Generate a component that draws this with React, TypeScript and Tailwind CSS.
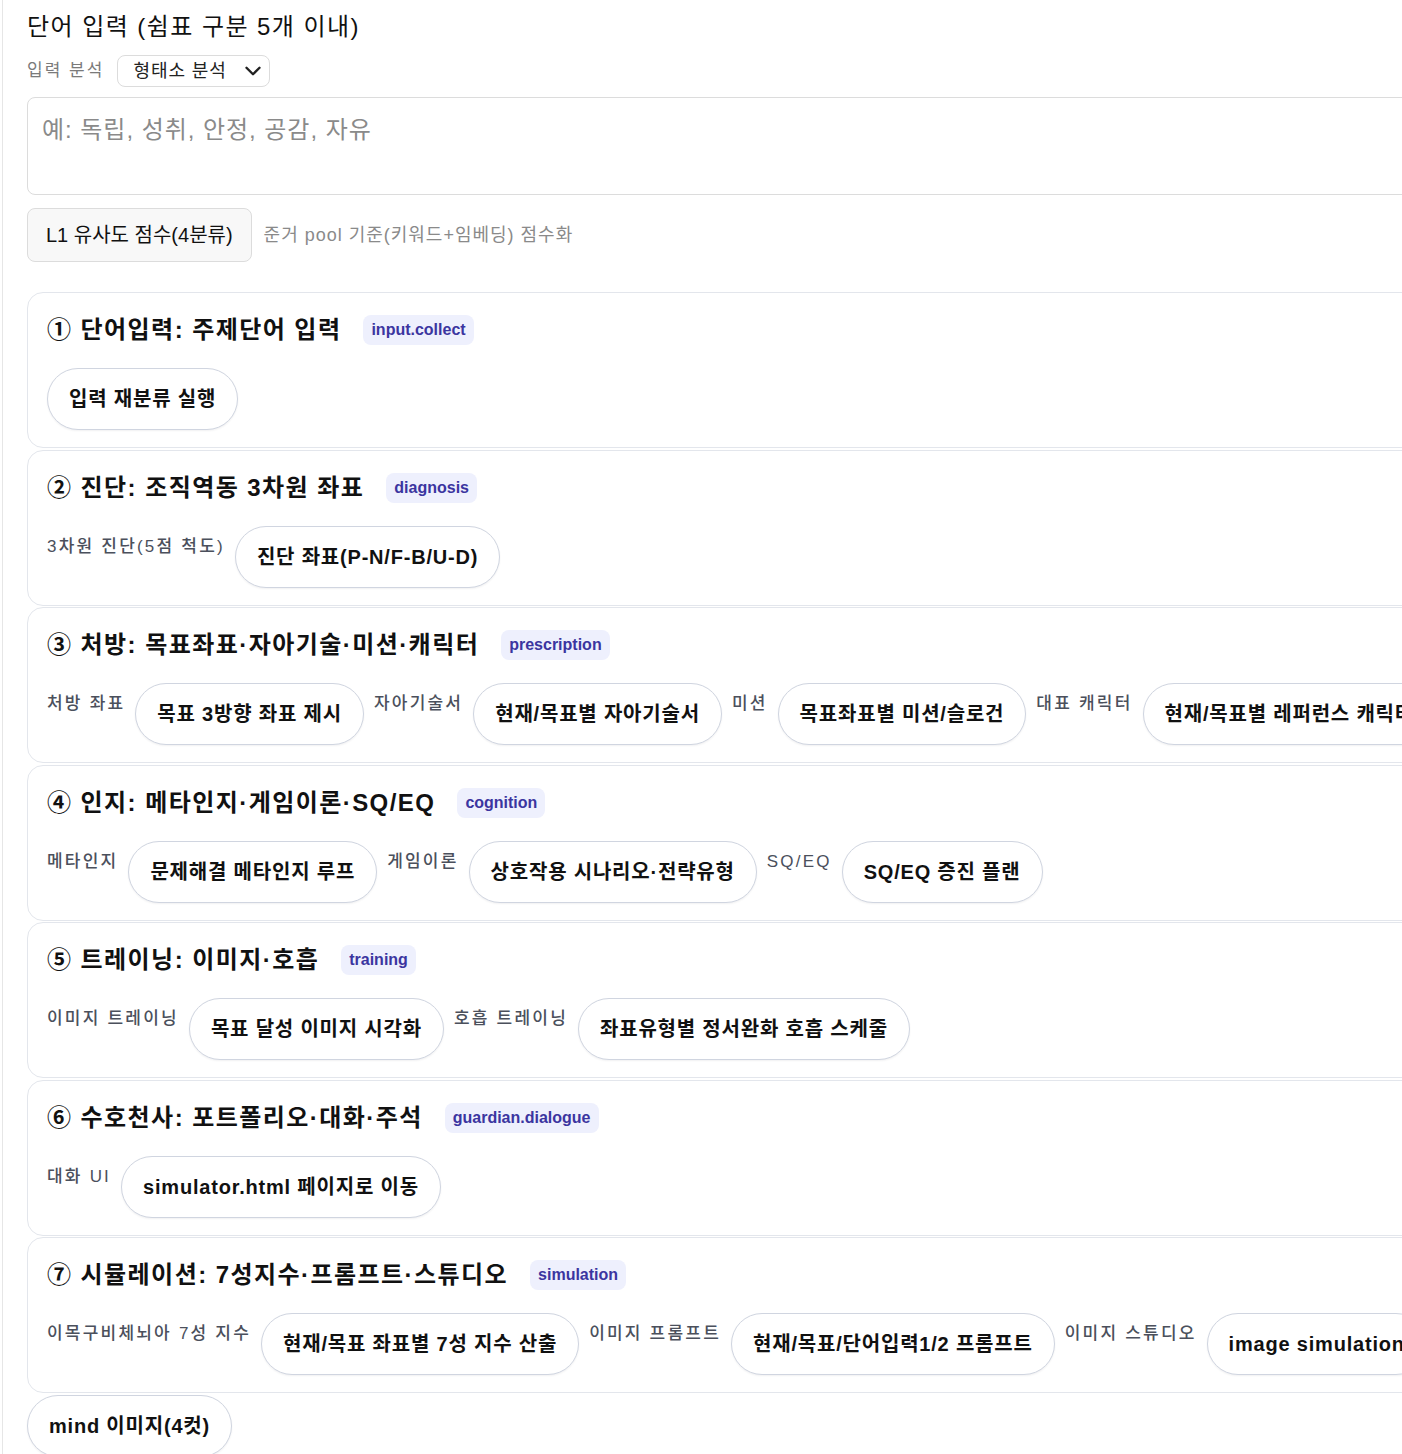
import React from 'react';
import { ChevronDown } from 'lucide-react';

// --- Data ---
type Item = { label?: string; chip: string };
type Stage = { title: string; tag: string; items: Item[] };

const STAGES: Stage[] = [
    {
        title: '① 단어입력: 주제단어 입력',
        tag: 'input.collect',
        items: [{ chip: '입력 재분류 실행' }],
    },
    {
        title: '② 진단: 조직역동 3차원 좌표',
        tag: 'diagnosis',
        items: [{ label: '3차원 진단(5점 척도)', chip: '진단 좌표(P-N/F-B/U-D)' }],
    },
    {
        title: '③ 처방: 목표좌표·자아기술·미션·캐릭터',
        tag: 'prescription',
        items: [
            { label: '처방 좌표', chip: '목표 3방향 좌표 제시' },
            { label: '자아기술서', chip: '현재/목표별 자아기술서' },
            { label: '미션', chip: '목표좌표별 미션/슬로건' },
            { label: '대표 캐릭터', chip: '현재/목표별 레퍼런스 캐릭터' },
        ],
    },
    {
        title: '④ 인지: 메타인지·게임이론·SQ/EQ',
        tag: 'cognition',
        items: [
            { label: '메타인지', chip: '문제해결 메타인지 루프' },
            { label: '게임이론', chip: '상호작용 시나리오·전략유형' },
            { label: 'SQ/EQ', chip: 'SQ/EQ 증진 플랜' },
        ],
    },
    {
        title: '⑤ 트레이닝: 이미지·호흡',
        tag: 'training',
        items: [
            { label: '이미지 트레이닝', chip: '목표 달성 이미지 시각화' },
            { label: '호흡 트레이닝', chip: '좌표유형별 정서완화 호흡 스케줄' },
        ],
    },
    {
        title: '⑥ 수호천사: 포트폴리오·대화·주석',
        tag: 'guardian.dialogue',
        items: [{ label: '대화 UI', chip: 'simulator.html 페이지로 이동' }],
    },
    {
        title: '⑦ 시뮬레이션: 7성지수·프롬프트·스튜디오',
        tag: 'simulation',
        items: [
            { label: '이목구비체뇌아 7성 지수', chip: '현재/목표 좌표별 7성 지수 산출' },
            { label: '이미지 프롬프트', chip: '현재/목표/단어입력1/2 프롬프트' },
            { label: '이미지 스튜디오', chip: 'image simulation' },
        ],
    },
];

function Chip({ children }: { children: React.ReactNode }) {
    return (
        <button className="shrink-0 h-[62px] px-[21px] rounded-full border border-[#d0d5e0] bg-white text-[20px] font-bold tracking-[0.04em] text-[#111] whitespace-nowrap shadow-[0_1px_2px_rgba(15,23,42,0.06)]">
            {children}
        </button>
    );
}

function StageCard({ stage }: { stage: Stage }) {
    return (
        <section className="rounded-2xl border border-[#e3e6ec] bg-white pl-[19px] pt-[20px] pb-[17px]">
            <div className="flex items-center h-[34px] gap-[22px]">
                <h3 className="text-[24px] leading-[34px] font-bold tracking-[0.06em] text-[#111] whitespace-nowrap">{stage.title}</h3>
                <span className="h-[30px] px-[8px] flex items-center rounded-lg bg-[#eef0fd] text-[16px] font-semibold text-[#3b35a0]">
                    {stage.tag}
                </span>
            </div>
            <div className="mt-[21px] flex items-start gap-[10px] whitespace-nowrap">
                {stage.items.map((it) => (
                    <React.Fragment key={it.chip}>
                        {it.label && (
                            <span className="shrink-0 mt-[9px] text-[17px] leading-6 font-medium tracking-[0.13em] text-[#4b505c]">
                                {it.label}
                            </span>
                        )}
                        <Chip>{it.chip}</Chip>
                    </React.Fragment>
                ))}
            </div>
        </section>
    );
}

export default function App() {
    return (
        <div className="w-[1402px] min-h-[1454px] overflow-hidden bg-white pl-[2px] font-['Liberation_Sans','Noto_Sans_CJK_KR',sans-serif]">
            <div className="w-[1500px] min-h-[1454px] border-l border-[#e6e6e6] pl-[24px] pt-[11px]">
                {/* --- Word input --- */}
                <h2 className="text-[24px] leading-8 tracking-[0.06em] text-[#111]">단어 입력 (쉼표 구분 5개 이내)</h2>

                <div className="mt-3 flex items-center gap-[13px]">
                    <span className="text-[17px] tracking-[0.12em] text-[#7a7a7a]">입력 분석</span>
                    <div className="h-[32px] w-[153px] flex items-center justify-between pl-[15px] pr-[3px] rounded-lg border border-[#dcdcdc] bg-white text-[18px] tracking-[0.05em] text-[#222]">
                        <span>형태소 분석</span>
                        <ChevronDown size={26} strokeWidth={2.2} className="text-[#222]" />
                    </div>
                </div>

                <div className="mt-[10px] h-[98px] rounded-lg border border-[#dcdcdc] px-[14px] pt-[14px] text-[24px] tracking-[0.04em] text-[#8a8a8a]">
                    예: 독립, 성취, 안정, 공감, 자유
                </div>

                <div className="mt-[13px] flex items-center gap-[12px]">
                    <button className="h-[54px] px-[18px] rounded-lg border border-[#dcdcdc] bg-[#f8f8f8] text-[20px] text-[#111]">
                        L1 유사도 점수(4분류)
                    </button>
                    <span className="text-[18px] tracking-[0.055em] text-[#8a8a8a]">준거 pool 기준(키워드+임베딩) 점수화</span>
                </div>

                {/* --- Stages --- */}
                <div className="mt-[30px] flex flex-col gap-[1.5px]">
                    {STAGES.map((s) => (
                        <StageCard key={s.tag} stage={s} />
                    ))}
                    <div className="flex">
                        <Chip>mind 이미지(4컷)</Chip>
                    </div>
                </div>
            </div>
        </div>
    );
}
